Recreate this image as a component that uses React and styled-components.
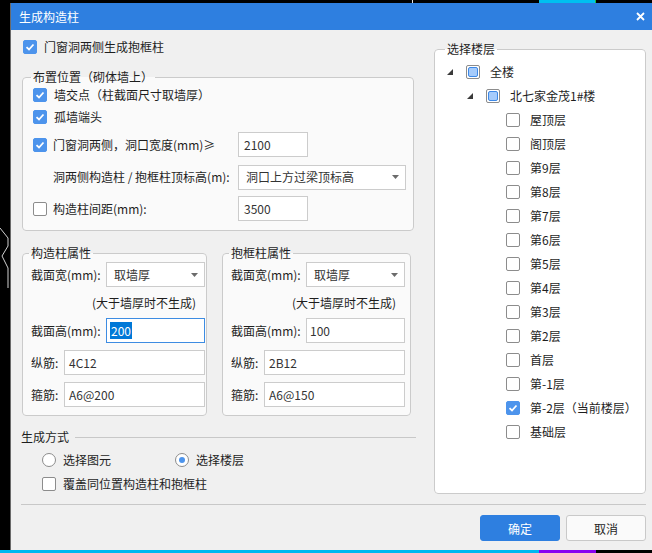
import React from "react";
import styled, { createGlobalStyle } from "styled-components";

const GlobalStyle = createGlobalStyle`
	html, body {
		margin: 0;
		padding: 0;
		background: #000;
	}
	body {
		font-family: "Noto Sans CJK SC", "Liberation Sans", sans-serif;
		font-size: 12px;
		color: #1e1e1e;
	}
`;

const BLUE = "#2e7fe0";

const Desktop = styled.div`
	width: 652px;
	height: 553px;
	display: flex;
	flex-direction: column;
	background: #000;
	overflow: hidden;
`;

const Strip = styled.div`
	display: flex;
	height: 3px;
	flex: none;
`;

const StripPart = styled.div`
	width: ${(p) => p.$w}px;
	flex: ${(p) => (p.$w ? "none" : 1)};
	background: ${(p) => p.$c};
`;

const Middle = styled.div`
	display: flex;
	flex: 1;
	min-height: 0;
`;

const LeftEdge = styled.div`
	width: 10px;
	border-right: 1px solid #6a6a6a;
	flex: none;
	display: flex;
	flex-direction: column;
	justify-content: flex-end;
	svg {
		margin-bottom: 262px;
	}
`;

const Dialog = styled.div`
	width: 641px;
	display: flex;
	flex-direction: column;
	background: #f0f0f0;
`;

const TitleBar = styled.div`
	height: 27px;
	flex: none;
	background: ${BLUE};
	color: #fff;
	display: flex;
	align-items: center;
	justify-content: space-between;
	padding: 0 7px 0 8px;
	font-size: 12px;
	line-height: 16px;
`;

const Body = styled.div`
	flex: 1;
	display: flex;
	flex-direction: column;
	padding: 0 6px 0 11px;
`;

const MainRow = styled.div`
	display: flex;
	gap: 20px;
	height: 474px;
	flex: none;
`;

const LeftCol = styled.div`
	width: 392px;
	display: flex;
	flex-direction: column;
`;

const RightCol = styled.div`
	width: 212px;
	display: flex;
	flex-direction: column;
`;

const Group = styled.fieldset`
	margin: ${(p) => p.$mt || 0}px 0 0 0;
	min-width: 0;
	box-sizing: border-box;
	border: 1px solid #cbcbcb;
	border-radius: 4px;
	background: ${(p) => p.$bg || "#fafafa"};
	padding: ${(p) => p.$pad};
	width: ${(p) => p.$w}px;
	height: ${(p) => (p.$h ? `${p.$h}px` : "auto")};
	display: flex;
	flex-direction: column;
`;

const Legend = styled.legend`
	padding: 0 2px;
	margin-left: -2px;
	font-size: 12px;
	line-height: 16px;
	color: #1e1e1e;
`;

const Row = styled.div`
	display: flex;
	align-items: center;
	height: ${(p) => p.$h || 20}px;
	margin-top: ${(p) => p.$mt || 0}px;
	margin-left: ${(p) => p.$ml || 0}px;
	flex: none;
	line-height: 16px;
`;

const LabelCell = styled.div`
	width: ${(p) => p.$w}px;
	flex: none;
	display: flex;
	align-items: center;
	gap: 6px;
	padding-left: ${(p) => p.$indent || 0}px;
	box-sizing: border-box;
	white-space: nowrap;
`;

const Field = styled.div`
	box-sizing: border-box;
	height: ${(p) => p.$h || 25}px;
	width: ${(p) => (p.$w ? `${p.$w}px` : "auto")};
	flex: ${(p) => (p.$w ? "none" : 1)};
	border: 1px solid ${(p) => (p.$focus ? "#3d8ce2" : "#cccccc")};
	background: #fff;
	display: flex;
	align-items: center;
	justify-content: space-between;
	padding: 0 6px 0 ${(p) => p.$pl || 5}px;
	color: #333;
	font-size: 12px;
	line-height: 16px;
	white-space: nowrap;
`;

const Selected = styled.span`
	background: #0078d7;
	color: #fff;
	padding: 0 1px;
	line-height: 15px;
`;

const Hint = styled.div`
	margin: 8px 0 0 61px;
	line-height: 16px;
	height: 16px;
	flex: none;
`;

const PropRow = styled.div`
	display: flex;
	gap: 15px;
	margin-top: 14px;
`;

const MethodHead = styled.div`
	display: flex;
	align-items: center;
	margin-top: 13px;
	height: 16px;
	line-height: 16px;
	margin-left: -1px;
	span {
		flex: none;
	}
	&::after {
		content: "";
		flex: 1;
		height: 1px;
		background: #c8c8c8;
		margin: 0 -2px 0 6px;
	}
`;

const Option = styled.label`
	display: flex;
	align-items: center;
	gap: 7px;
	width: ${(p) => (p.$w ? `${p.$w}px` : "auto")};
`;

const BoxBase = styled.span`
	width: 14px;
	height: 14px;
	box-sizing: border-box;
	flex: none;
	display: inline-flex;
	align-items: center;
	justify-content: center;
	border-radius: ${(p) => (p.$round ? "50%" : "2px")};
	border: 1px solid ${(p) => (p.$on ? "#4d94ec" : "#8c8c8c")};
	background: ${(p) => (p.$on ? "#4d94ec" : "#fff")};
`;

const PartFill = styled.span`
	width: 10px;
	height: 10px;
	box-sizing: border-box;
	border-radius: 2px;
	border: 1px solid #3d88e6;
	background: #a5cbfb;
`;

const Dot = styled.span`
	width: 6px;
	height: 6px;
	border-radius: 50%;
	background: #4d94ec;
`;

const Separator = styled.div`
	height: 1px;
	background: #c8c8c8;
	margin-left: -1px;
	flex: none;
`;

const ButtonRow = styled.div`
	display: flex;
	justify-content: flex-end;
	gap: 6px;
	margin-top: 10px;
`;

const Button = styled.button`
	width: 80px;
	height: 26px;
	box-sizing: border-box;
	border-radius: 3px;
	font-family: inherit;
	font-size: 12px;
	padding: 0;
	border: 1px solid ${(p) => (p.$primary ? BLUE : "#c9c9c9")};
	background: ${(p) => (p.$primary ? BLUE : "#fafafa")};
	color: ${(p) => (p.$primary ? "#fff" : "#1e1e1e")};
`;

const TreeRow = styled.div`
	display: flex;
	align-items: center;
	height: 24px;
	padding-left: ${(p) => p.$depth * 20}px;
	white-space: nowrap;
	line-height: 16px;
`;

const Toggle = styled.span`
	width: 19px;
	flex: none;
	display: flex;
	align-items: center;
`;

const TreeText = styled.span`
	margin-left: 10px;
`;

const Check = ({ state = "off" }) => (
	<BoxBase $on={state === "on"}>
		{state === "on" && (
			<svg width="10" height="10" viewBox="0 0 10 10">
				<polyline points="1.5,5.2 4,7.5 8.5,2.5" fill="none" stroke="#fff" strokeWidth="1.8" />
			</svg>
		)}
		{state === "part" && <PartFill />}
	</BoxBase>
);

const Radio = ({ on }) => <BoxBase $round>{on && <Dot />}</BoxBase>;

const Arrow = () => (
	<svg width="7" height="4" viewBox="0 0 7 4">
		<polygon points="0,0 7,0 3.5,4" fill="#6b6b6b" />
	</svg>
);

const Caret = () => (
	<svg width="6" height="6" viewBox="0 0 6 6">
		<polygon points="0,6 6,6 6,0" fill="#3a3a3a" />
	</svg>
);

const floors = [
	["屋顶层"],
	["阁顶层"],
	["第9层"],
	["第8层"],
	["第7层"],
	["第6层"],
	["第5层"],
	["第4层"],
	["第3层"],
	["第2层"],
	["首层"],
	["第-1层"],
	["第-2层（当前楼层）", "on"],
	["基础层"],
];

const PropGroup = ({ title, w, pr, high, lon, hoop, focus }) => (
	<Group $w={w} $pad={`0 ${pr}px 8px 8px`}>
		<Legend>{title}</Legend>
		<Row $h={25} $mt={1}>
			<LabelCell $w={75}>截面宽(mm):</LabelCell>
			<Field $pl={7}>
				取墙厚
				<Arrow />
			</Field>
		</Row>
		<Hint>(大于墙厚时不生成)</Hint>
		<Row $h={25} $mt={7}>
			<LabelCell $w={75}>截面高(mm):</LabelCell>
			<Field $focus={focus} $pl={3}>
				<span>{focus ? <Selected>{high}</Selected> : high}</span>
			</Field>
		</Row>
		<Row $h={25} $mt={7}>
			<LabelCell $w={33}>纵筋:</LabelCell>
			<Field $pl={4}>{lon}</Field>
		</Row>
		<Row $h={25} $mt={7}>
			<LabelCell $w={33}>箍筋:</LabelCell>
			<Field $pl={4}>{hoop}</Field>
		</Row>
	</Group>
);

export default function App() {
	return (
		<>
			<GlobalStyle />
			<Desktop>
				<Strip>
					<StripPart $w={412} $c="#000" />
					<StripPart $w={1} $c="#e6e6e6" />
					<StripPart $w={126} $c="#000" />
					<StripPart $w={56} $c="#00c0f0" />
					<StripPart $w={1} $c="#20c040" />
					<StripPart $c="#000" />
				</Strip>
				<Middle>
					<LeftEdge>
						<svg width="10" height="60" viewBox="0 0 10 60">
							<polyline points="0,0 8,10 8,18 2,28 8,40 8,60" fill="none" stroke="#d0d0d0" strokeWidth="1" />
						</svg>
					</LeftEdge>
					<Dialog>
						<TitleBar>
							<span>生成构造柱</span>
							<svg width="9" height="9" viewBox="0 0 9 9">
								<path d="M1 1 L8 8 M8 1 L1 8" stroke="#fff" strokeWidth="1.8" />
							</svg>
						</TitleBar>
						<Body>
							<MainRow>
								<LeftCol>
									<Row $h={19} $mt={7} $ml={1}>
										<Option>
											<Check state="on" />
											门窗洞两侧生成抱框柱
										</Option>
									</Row>
									<Group $mt={13} $w={392} $pad="0 10px 9px 10px">
										<Legend>布置位置（砌体墙上）</Legend>
										<Row>
											<Option>
												<Check state="on" />
												墙交点（柱截面尺寸取墙厚）
											</Option>
										</Row>
										<Row $mt={2}>
											<Option>
												<Check state="on" />
												孤墙端头
											</Option>
										</Row>
										<Row $h={25} $mt={5}>
											<LabelCell $w={205}>
												<Check state="on" />
												门窗洞两侧，洞口宽度(mm)≥
											</LabelCell>
											<Field $w={70}>2100</Field>
										</Row>
										<Row $h={26} $mt={7}>
											<LabelCell $w={205} $indent={20}>
												洞两侧构造柱 / 抱框柱顶标高(m):
											</LabelCell>
											<Field $w={168} $pl={7}>
												洞口上方过梁顶标高
												<Arrow />
											</Field>
										</Row>
										<Row $h={25} $mt={6}>
											<LabelCell $w={205}>
												<Check />
												构造柱间距(mm):
											</LabelCell>
											<Field $w={70}>3500</Field>
										</Row>
									</Group>
									<PropRow>
										<PropGroup title="构造柱属性" w={185} pr={1} high="200" lon="4C12" hoop="A6@200" focus />
										<PropGroup title="抱框柱属性" w={189} pr={5} high="100" lon="2B12" hoop="A6@150" />
									</PropRow>
									<MethodHead>
										<span>生成方式</span>
									</MethodHead>
									<Row $h={16} $mt={7} $ml={20}>
										<Option $w={133}>
											<Radio />
											选择图元
										</Option>
										<Option>
											<Radio on />
											选择楼层
										</Option>
									</Row>
									<Row $h={16} $mt={8} $ml={20}>
										<Option>
											<Check />
											覆盖同位置构造柱和抱框柱
										</Option>
									</Row>
								</LeftCol>
								<RightCol>
									<Group $mt={11} $w={212} $h={453} $bg="#fff" $pad="3px 4px 0 12px">
										<Legend>选择楼层</Legend>
										<TreeRow $depth={0}>
											<Toggle>
												<Caret />
											</Toggle>
											<Check state="part" />
											<TreeText>全楼</TreeText>
										</TreeRow>
										<TreeRow $depth={1}>
											<Toggle>
												<Caret />
											</Toggle>
											<Check state="part" />
											<TreeText>北七家金茂1#楼</TreeText>
										</TreeRow>
										{floors.map(([name, state]) => (
											<TreeRow key={name} $depth={2}>
												<Toggle />
												<Check state={state} />
												<TreeText>{name}</TreeText>
											</TreeRow>
										))}
									</Group>
								</RightCol>
							</MainRow>
							<Separator />
							<ButtonRow>
								<Button $primary>确定</Button>
								<Button>取消</Button>
							</ButtonRow>
						</Body>
					</Dialog>
				</Middle>
				<Strip>
					<StripPart $w={539} $c="#00b8f0" />
					<StripPart $w={57} $c="#8a00f0" />
					<StripPart $c="#000" />
				</Strip>
			</Desktop>
		</>
	);
}
